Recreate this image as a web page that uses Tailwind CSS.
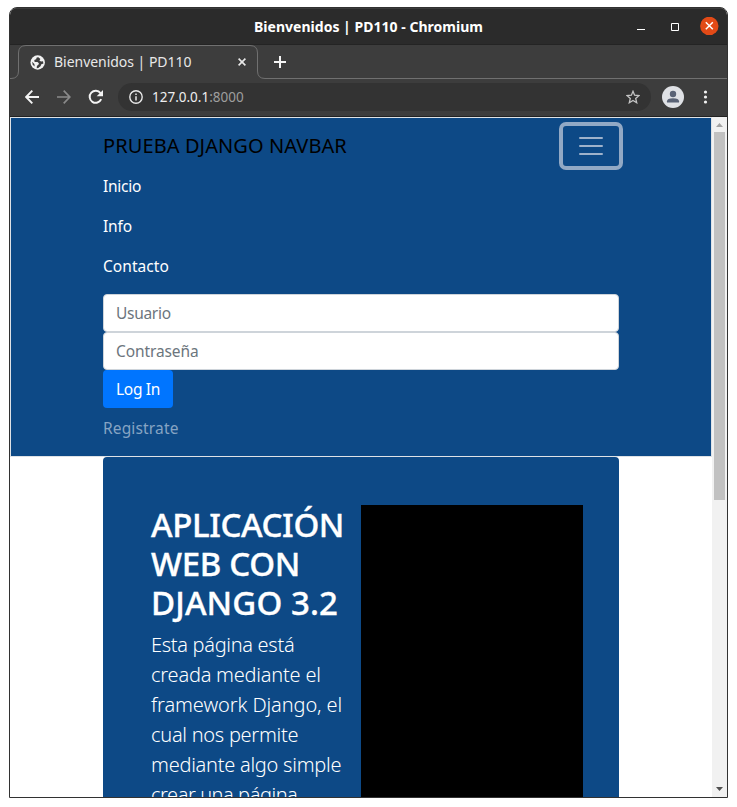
<!DOCTYPE html>
<html lang="es">
<head>
<meta charset="utf-8">
<title>Bienvenidos | PD110</title>
<script src="https://cdn.jsdelivr.net/npm/@tailwindcss/browser@4"></script>
</head>
<body class="h-[807px] w-[737px] overflow-hidden bg-white pt-[7px] pl-[9px] font-['Noto_Sans',sans-serif]">
<div class="flex h-[791px] w-[719px] flex-col overflow-hidden rounded-t-lg border border-[#323232] bg-white">
  <!-- Title bar -->
  <header class="relative flex h-[37px] shrink-0 items-center justify-center border-t border-b border-t-[#3b3b3b] border-b-[#242424] bg-[#2b2b2b]">
    <h1 class="text-[14px] leading-5 font-bold whitespace-nowrap text-white"><span class="tracking-[0.02px]">Bienvenidos | PD110 - Chromium</span></h1>
    <div class="absolute top-0 right-0 flex h-full items-center pr-[8px]">
      <svg class="mr-[26px] h-[10px] w-[8px]" viewBox="0 0 8 10"><path d="M0 7.500h8" stroke="#fff"/></svg>
      <svg class="mr-[21px] h-[8px] w-[8px]" viewBox="0 0 8 8"><path d="M.5.5h7v7h-7z" fill="none" stroke="#fff"/></svg>
      <svg class="h-[19px] w-[19px]" viewBox="0 0 19 19"><circle cx="9.300" cy="8.900" r="9.200" fill="#e24a17"/><path d="M5.800 5.300l7 7M12.800 5.300l-7 7" stroke="#fff" stroke-width="1.500"/></svg>
    </div>
  </header>
  <!-- Tab strip -->
  <div class="relative flex h-[34px] shrink-0 bg-[#3d3d3d]">
    <svg class="absolute inset-0 h-[34px] w-[717px]" viewBox="0 0 717 34" fill="none"><path d="M0 33.500h1q7.500 0 7.500-7.500V8Q8.500.5 16 .5h224q7.500 0 7.500 7.500v18q0 7.500 7.500 7.500h462" stroke="#707070"/></svg>
    <div class="relative flex w-[248px] items-center pl-[20px]">
      <svg class="h-[15px] w-[15px]" viewBox="0 0 15 15"><circle cx="7.700" cy="7.500" r="7.200" fill="#f2f2f2"/><path d="M8.300 2.300 6.700 2.500 6.100 4.200 4.300 5 4.600 6.900H7.500L8.900 8.300 8.300 9.900 6.900 10.700 6.700 13.200 8.300 12.900 10.700 10.900 11 9.400 13.400 8.500 13 6.300 11 6.500 9.400 5.600 10.400 3.900Z" fill="#3d3d3d"/><path d="M2.100 6.700 4.400 9.100 4.600 11.600 2.700 9.700Z" fill="#3d3d3d"/></svg>
      <span class="ml-[9px] text-[14px] leading-5 tracking-[-0.03px] whitespace-nowrap text-[#e8e8e8]">Bienvenidos | PD110</span>
      <svg class="absolute top-[13px] left-[228px] h-[8px] w-[8px]" viewBox="0 0 8 8"><path d="M.6.6l6.800 6.800M7.400.6L.6 7.400" stroke="#e8e8e8" stroke-width="1.600"/></svg>
    </div>
    <svg class="relative mt-[11px] ml-[16px] h-[12px] w-[12px]" viewBox="0 0 12 12"><path d="M6 0v12M0 6h12" stroke="#f5f5f5" stroke-width="2"/></svg>
  </div>
  <!-- Toolbar -->
  <div class="flex h-[38px] shrink-0 items-center border-b border-[#222] bg-[#3d3d3d] pb-px pl-[15px]">
    <svg class="h-[14px] w-[14px]" viewBox="0 0 14 14" fill="none" stroke="#f4f4f4" stroke-width="1.900"><path d="M14 7H1.400M7.300.7 1.200 7l6.100 6.300"/></svg>
    <svg class="ml-[18px] h-[14px] w-[14px]" viewBox="0 0 14 14" fill="none" stroke="#8a8a8a" stroke-width="1.700"><path d="M0 7h12.600M6.700.7 12.800 7l-6.100 6.300"/></svg>
    <svg class="ml-[17px] h-[16px] w-[16px]" viewBox="0 0 16 16"><path d="M13.200 10.200A6 6 0 1 1 12.500 4.200" fill="none" stroke="#f4f4f4" stroke-width="2"/><path d="M15 1v6.300H8.700z" fill="#f4f4f4"/></svg>
    <div class="ml-[14px] flex h-[28px] w-[533px] items-center rounded-full bg-[#333] pr-[11px] pl-[11px]">
      <svg class="h-[14px] w-[14px]" viewBox="0 0 14 14"><circle cx="7" cy="7" r="6.200" fill="none" stroke="#e8e8e8" stroke-width="1.400"/><path d="M7 6.300v4.200M7 3.500v1.500" stroke="#e8e8e8" stroke-width="1.500"/></svg>
      <span class="ml-[9px] text-[13.500px] leading-5 text-[#9e9e9e]"><span class="text-[#eee]">127.0.0.1</span>:8000</span>
      <svg class="ml-auto h-[14px] w-[14px]" viewBox="0 0 14 14" fill="none" stroke="#c4c4c4" stroke-width="1.300"><path d="M7 1.300 8.600 5.200 13 5.600 9.700 8.400 10.700 12.700 7 10.400 3.300 12.700 4.300 8.400 1 5.600 5.400 5.200Z"/></svg>
    </div>
    <svg class="ml-[11px] h-[22px] w-[22px]" viewBox="0 0 22 22"><circle cx="11" cy="11" r="11" fill="#dfe1e5"/><circle cx="11" cy="8" r="3.200" fill="#596275"/><path d="M5 16.500v-1.300q0-3 6-3t6 3v1.300z" fill="#596275"/></svg>
    <svg class="ml-[19px] h-[14px] w-[5px]" viewBox="0 0 5 14" fill="#f2f2f2"><circle cx="2.500" cy="2" r="1.600"/><circle cx="2.500" cy="7" r="1.600"/><circle cx="2.500" cy="12" r="1.600"/></svg>
  </div>
  <!-- Viewport -->
  <div class="flex min-h-0 grow">
    <main class="flex w-[702px] flex-col overflow-hidden bg-white">
      <nav class="relative h-[340px] shrink-0 border border-[#dee2e6] bg-[#0d4986] pr-[92px] pl-[92px] text-white">
        <div class="flex h-[48px] w-[520px] items-start justify-between pt-1">
          <a class="mt-[8px] text-[20px] leading-8 whitespace-nowrap text-black"><span class="tracking-[0.09px]">PRUEBA DJANGO NAVBAR</span></a>
          <button class="flex h-[48px] w-[64px] shrink-0 items-center justify-center rounded-[7px] border-4 border-[#92a9c5]">
            <svg class="h-[18px] w-[24px]" viewBox="0 0 24 18"><path d="M1 1h22M1 9h22M1 17h22" stroke="#9eb2cb" stroke-width="2" stroke-linecap="round"/></svg>
          </button>
        </div>
        <ul class="text-[15.500px] leading-6">
          <li class="h-10 py-2 tracking-[-0.25px]">Inicio</li>
          <li class="h-10 py-2 tracking-[-0.15px]">Info</li>
          <li class="h-10 py-2 tracking-[0.05px]">Contacto</li>
        </ul>
        <form class="mt-2 flex flex-col items-start text-[15.500px] leading-6">
          <div class="flex h-[38px] w-[516px] items-center rounded border border-[#ced4da] bg-white px-3 text-[#6c757d]"><span class="tracking-[-0.3px]">Usuario</span></div>
          <div class="flex h-[38px] w-[516px] items-center rounded border border-[#ced4da] bg-white px-3 text-[#6c757d]"><span class="tracking-[-0.1px]">Contraseña</span></div>
          <div class="flex h-[38px] w-[70px] items-center rounded bg-[#0075ff] px-[13px] whitespace-nowrap"><span class="tracking-[-0.3px]">Log In</span></div>
        </form>
        <p class="pt-2 text-[15.500px] leading-6 text-[#86a4c3]"><span class="tracking-[0.15px]">Registrate</span></p>
      </nav>
      <section class="ml-[93px] flex h-[400px] w-[516px] shrink-0 justify-between rounded bg-[#0d4986] pt-[48px] pr-[36px] pl-[48px] text-white">
        <div>
          <h2 class="text-[33px] leading-[39px] font-medium whitespace-nowrap [-webkit-text-stroke:0.35px_white]"><span class="tracking-[-0.4px]">APLICACIÓN</span><br><span class="tracking-[-0.35px]">WEB CON</span><br><span class="tracking-[0.1px]">DJANGO 3.2</span></h2>
          <p class="mt-2 text-[20px] leading-[30px] font-light whitespace-nowrap"><span class="tracking-[-0.31px]">Esta página está</span><br><span class="tracking-[-0.22px]">creada mediante el</span><br><span class="tracking-[-0.1px]">framework Django, el</span><br><span class="tracking-[-0.27px]">cual nos permite</span><br><span class="tracking-[-0.25px]">mediante algo simple</span><br><span class="tracking-[-0.45px]">crear una página</span></p>
        </div>
        <div class="w-[222px] shrink-0 bg-black"></div>
      </section>
    </main>
    <!-- Scrollbar -->
    <div class="flex w-[15px] flex-col items-center bg-[#f1f1f1]">
      <svg class="h-[15px] w-[15px] shrink-0" viewBox="0 0 15 15"><path d="M4 10h7L7.500 6z" fill="#a3a3a3"/></svg>
      <div class="h-[368px] w-[11px] bg-[#c1c1c1]"></div>
      <svg class="mt-auto h-[15px] w-[15px] shrink-0" viewBox="0 0 15 15"><path d="M4 5h7L7.500 9z" fill="#505050"/></svg>
    </div>
  </div>
</div>
</body>
</html>
